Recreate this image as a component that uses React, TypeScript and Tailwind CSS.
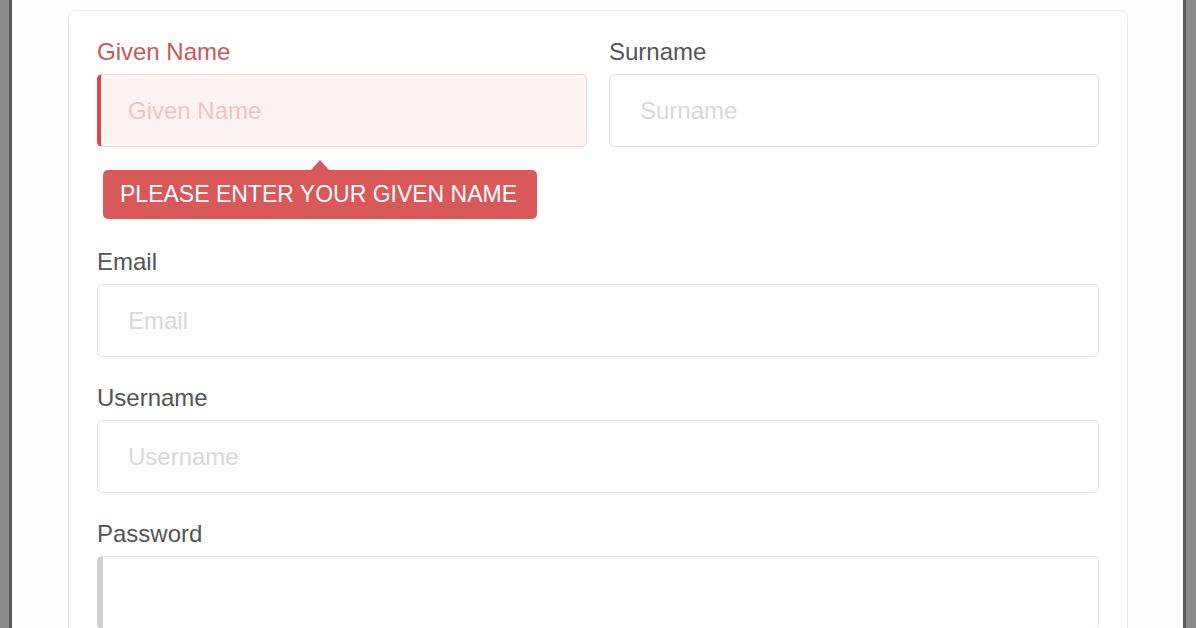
import React from "react";

const font = { fontFamily: '"Liberation Sans", Arial, sans-serif' };

const Field: React.FC<{
  label: string;
  placeholder?: string;
  className?: string;
  inputClass: string;
  labelClass?: string;
}> = ({ label, placeholder, className = "", inputClass, labelClass = "text-[#555555]" }) => (
  <div className={`flex flex-col ${className}`}>
    <label className={`text-[24px] leading-[24px] mb-[10px] ${labelClass}`}>{label}</label>
    <input
      placeholder={placeholder}
      className={`h-[73px] w-full rounded-[5px] border text-[24px] outline-none ${inputClass}`}
    />
  </div>
);

export default function App() {
  return (
    <div className="flex h-[628px] w-full overflow-hidden bg-white" style={font}>
      {/* 왼쪽 창 테두리 */}
      <div className="w-[9px] shrink-0 bg-[#8a8a8a]" />
      <div className="w-[3px] shrink-0 bg-[#5c5c5c]" />

      <div className="flex-1 bg-[#fefefe] pl-[56px] pr-[55px] pt-[10px]">
        <div className="h-[640px] rounded-[8px] border border-[#e9e9e9] bg-white px-[28px] pt-[29px]">
          {/* 이름 / 성 */}
          <div className="grid grid-cols-2 gap-[22px]">
            <div className="flex flex-col">
              <Field
                label="Given Name"
                placeholder="Given Name"
                labelClass="text-[#c9585c]"
                inputClass="border-[#f0d3d4] border-l-4 border-l-[#d4484c] bg-[#fdf3f3] pl-[27px] placeholder:text-[#f2c3c5]"
              />
              {/* 오류 툴팁 */}
              <div className="relative ml-[6px] mt-[23px] w-[434px]">
                <div className="absolute left-[208px] top-[-10px] h-0 w-0 border-x-[9px] border-b-[10px] border-x-transparent border-b-[#d9585a]" />
                <div className="flex h-[49px] items-center rounded-[5px] bg-[#d9585a] pl-[17px] text-[23px] uppercase text-white">
                  Please enter your given name
                </div>
              </div>
            </div>
            <Field
              label="Surname"
              placeholder="Surname"
              inputClass="border-[#e2e2e2] px-[30px] placeholder:text-[#d8d8d8]"
            />
          </div>

          <Field
            label="Email"
            placeholder="Email"
            className="mt-[31px]"
            inputClass="border-[#e2e2e2] px-[30px] placeholder:text-[#d8d8d8]"
          />
          <Field
            label="Username"
            placeholder="Username"
            className="mt-[29px]"
            inputClass="border-[#e2e2e2] px-[30px] placeholder:text-[#d8d8d8]"
          />
          <Field
            label="Password"
            className="mt-[29px]"
            inputClass="border-[#e2e2e2] border-l-[6px] border-l-[#cfcfcf] px-[30px]"
          />
        </div>
      </div>

      {/* 오른쪽 창 테두리 */}
      <div className="w-[3px] shrink-0 bg-[#5c5c5c]" />
      <div className="w-[10px] shrink-0 bg-[#8a8a8a]" />
    </div>
  );
}
